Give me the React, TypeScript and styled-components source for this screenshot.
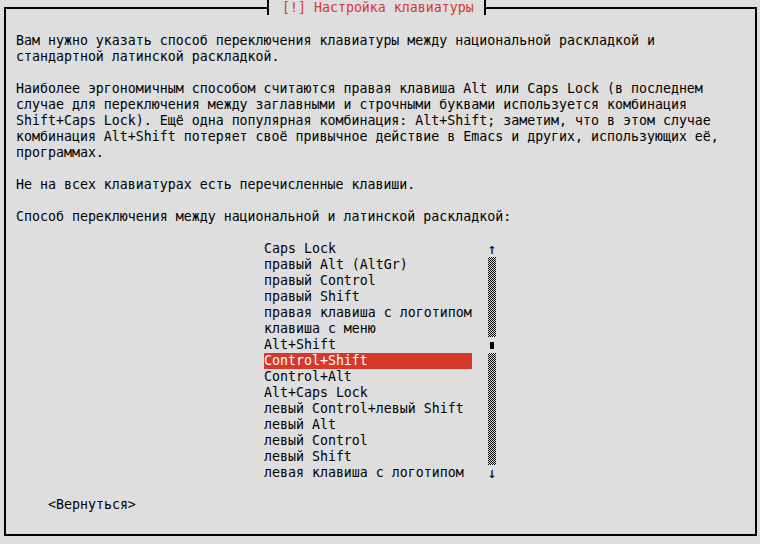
import styled, { createGlobalStyle } from "styled-components";

const GlobalStyle = createGlobalStyle`
  html, body {
    margin: 0;
    padding: 0;
    background: #dedede;
  }
  body {
    font-family: "DejaVu Sans Mono", "Liberation Mono", monospace;
    font-size: 13.28px;
    line-height: 16px;
    color: #000;
  }
`;

const intro = [
  "Вам нужно указать способ переключения клавиатуры между национальной раскладкой и",
  "стандартной латинской раскладкой.",
  "",
  "Наиболее эргономичным способом считаются правая клавиша Alt или Caps Lock (в последнем",
  "случае для переключения между заглавными и строчными буквами используется комбинация",
  "Shift+Caps Lock). Ещё одна популярная комбинация: Alt+Shift; заметим, что в этом случае",
  "комбинация Alt+Shift потеряет своё привычное действие в Emacs и других, использующих её,",
  "программах.",
  "",
  "Не на всех клавиатурах есть перечисленные клавиши.",
  "",
  "Способ переключения между национальной и латинской раскладкой:",
];

const options = [
  "Caps Lock",
  "правый Alt (AltGr)",
  "правый Control",
  "правый Shift",
  "правая клавиша с логотипом",
  "клавиша с меню",
  "Alt+Shift",
  "Control+Shift",
  "Control+Alt",
  "Alt+Caps Lock",
  "левый Control+левый Shift",
  "левый Alt",
  "левый Control",
  "левый Shift",
  "левая клавиша с логотипом",
];

const selectedIndex = 7;
const trackRows = 13;
const thumbRow = 5;

export default function App() {
  return (
    <>
      <GlobalStyle />
      <Screen>
        <Frame>
          <Title>[!] Настройка клавиатуры</Title>
          <Text>{intro.join("\n")}</Text>
          <ListArea>
            <List>
              {options.map((o, i) => (
                <Item key={o} $selected={i === selectedIndex}>
                  {o}
                </Item>
              ))}
            </List>
            <ScrollBar>
              <Arrow>↑</Arrow>
              {Array.from({ length: trackRows }).map((_, i) =>
                i === thumbRow ? (
                  <ThumbCell key={i}>
                    <Thumb />
                  </ThumbCell>
                ) : (
                  <Track key={i} />
                )
              )}
              <Arrow>↓</Arrow>
            </ScrollBar>
          </ListArea>
          <Buttons>
            <Button>&lt;Вернуться&gt;</Button>
          </Buttons>
        </Frame>
      </Screen>
    </>
  );
}

const Screen = styled.div`
  position: relative;
  width: 760px;
  height: 544px;
  overflow: hidden;
  padding-top: 7px;
  box-sizing: border-box;
`;

const Frame = styled.div`
  position: relative;
  margin-left: 4px;
  width: 753px;
  height: 529px;
  box-sizing: border-box;
  border: 2px solid #000;
  padding: 24px 0 0 10px;
`;

const Title = styled.div`
  position: absolute;
  top: -9px;
  left: 261px;
  height: 15px;
  padding: 0 10px 0 13px;
  background: #dedede;
  border-left: 2px solid #000;
  border-right: 2px solid #000;
  color: #d8382a;
  white-space: pre;
  line-height: 16px;
`;

const Text = styled.div`
  white-space: pre;
`;

const ListArea = styled.div`
  display: flex;
  align-items: flex-start;
  margin: 16px 0 0 248px;
  gap: 16px;
`;

const List = styled.div`
  display: flex;
  flex-direction: column;
  width: 208px;
`;

const Item = styled.div<{ $selected?: boolean }>`
  height: 16px;
  white-space: pre;
  background: ${(p) => (p.$selected ? "#d8382a" : "transparent")};
  color: ${(p) => (p.$selected ? "#fff" : "#000")};
`;

const ScrollBar = styled.div`
  display: flex;
  flex-direction: column;
  width: 8px;
`;

const Arrow = styled.div`
  height: 16px;
  width: 8px;
  display: flex;
  justify-content: center;
  font-size: 15px;
  line-height: 16px;
`;

const Track = styled.div`
  height: 16px;
  width: 8px;
  background: repeating-conic-gradient(#000 0 25%, #dedede 0 50%) 0 0 / 2px 2px;
`;

const ThumbCell = styled.div`
  height: 16px;
  width: 8px;
  display: flex;
  justify-content: center;
  padding-top: 5px;
  box-sizing: border-box;
`;

const Thumb = styled.div`
  width: 4px;
  height: 7px;
  background: #000;
`;

const Buttons = styled.div`
  display: flex;
  margin-top: 16px;
  padding-left: 32px;
`;

const Button = styled.div`
  white-space: pre;
`;
